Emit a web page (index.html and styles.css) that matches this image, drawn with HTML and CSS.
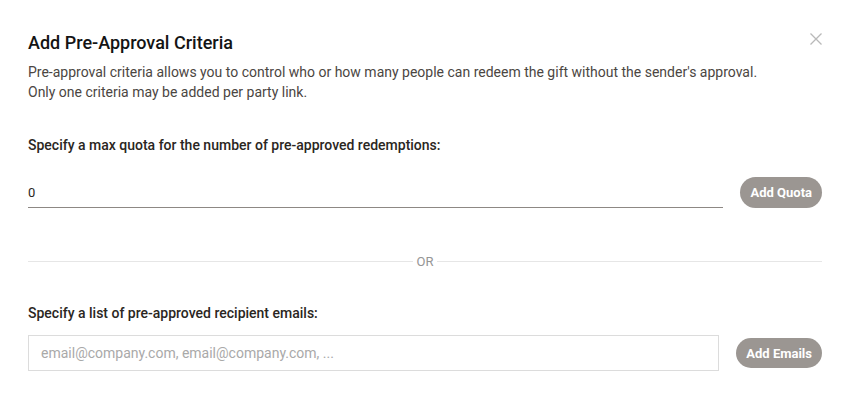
FILE: index.html
```html
<!DOCTYPE html>
<html lang="en">
<head>
<meta charset="utf-8">
<title>Add Pre-Approval Criteria</title>
<link rel="stylesheet" href="styles.css">
</head>
<body>
<div class="modal">
  <button class="close" aria-label="Close">
    <svg width="12" height="12" viewBox="0 0 12 12"><path d="M0.5 0.5 L11.5 11.5 M11.5 0.5 L0.5 11.5" stroke="#b9b9b9" stroke-width="1.3" fill="none"/></svg>
  </button>
  <h2 class="title">Add Pre-Approval Criteria</h2>
  <p class="desc">Pre-approval criteria allows you to control who or how many people can redeem the gift without the sender's approval.<br>Only one criteria may be added per party link.</p>

  <div class="section quota">
    <div class="label">Specify a max quota for the number of pre-approved redemptions:</div>
    <div class="row">
      <input class="quota-input" type="text" value="0">
      <button class="btn">Add Quota</button>
    </div>
  </div>

  <div class="divider"><span class="line"></span><span class="or">OR</span><span class="line"></span></div>

  <div class="section emails">
    <div class="label">Specify a list of pre-approved recipient emails:</div>
    <div class="row">
      <input class="email-input" type="text" placeholder="email@company.com, email@company.com, ...">
      <button class="btn">Add Emails</button>
    </div>
  </div>
</div>
</body>
</html>
```

FILE: styles.css
```css
html, body {
  margin: 0;
  padding: 0;
  background: #ffffff;
}
body {
  font-family: Roboto, "Liberation Sans", Arial, sans-serif;
  color: #2a2622;
}
.modal {
  position: relative;
  padding: 31px 23px 0 28px;
}
.close {
  position: absolute;
  top: 33px;
  right: 23px;
  width: 12px;
  height: 12px;
  padding: 0;
  border: 0;
  background: transparent;
  display: flex;
}
.title {
  margin: 0;
  font-size: 18px;
  line-height: 24px;
  font-weight: 500;
  color: #141414;
}
.desc {
  margin: 7px 0 0;
  font-size: 14px;
  line-height: 20px;
  color: #4b4642;
}
.section .label {
  font-size: 14px;
  line-height: 20px;
  font-weight: 500;
  color: #2a2622;
}
.quota {
  margin-top: 33px;
}
.row {
  display: flex;
  align-items: center;
  gap: 17px;
}
.quota .row {
  margin-top: 22px;
}
.quota-input {
  flex: 1;
  height: 31px;
  box-sizing: border-box;
  border: 0;
  border-bottom: 1px solid #8d8884;
  padding: 0;
  font-family: inherit;
  font-size: 13px;
  color: #2a2622;
  outline: none;
}
.btn {
  height: 31px;
  padding: 0 10px;
  border: 0;
  border-radius: 16px;
  background: #9b9692;
  color: #ffffff;
  font-family: inherit;
  font-size: 13px;
  font-weight: 700;
  white-space: nowrap;
}
.divider {
  display: flex;
  align-items: center;
  gap: 4px;
  margin-top: 45px;
  height: 16px;
}
.divider .line {
  flex: 1;
  height: 1px;
  background: #e6e6e6;
}
.divider .or {
  font-size: 13px;
  color: #959595;
}
.emails {
  margin-top: 34px;
}
.emails .row {
  margin-top: 12px;
}
.email-input {
  flex: 1;
  height: 36px;
  box-sizing: border-box;
  border: 1px solid #dcdcdc;
  padding: 0 12px;
  font-family: inherit;
  font-size: 14px;
  color: #2a2622;
  outline: none;
}
.email-input::placeholder {
  color: #a9a9a9;
}
.emails .btn {
  height: 30px;
}
```
